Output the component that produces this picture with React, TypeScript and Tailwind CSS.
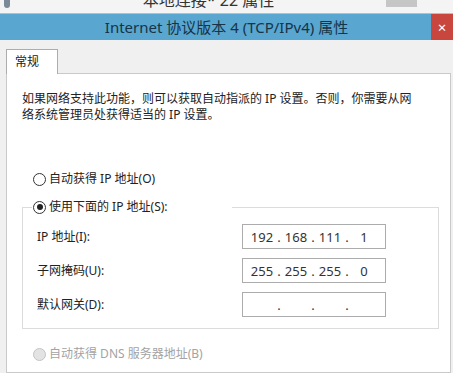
import React from 'react';

const font = 'font-["Noto_Sans","Noto_Sans_CJK_SC",sans-serif]';

function Radio({ checked = false, disabled = false }: { checked?: boolean; disabled?: boolean }) {
  return (
    <span
      className={`flex items-center justify-center w-[13px] h-[13px] rounded-full border shrink-0 ${
        disabled ? 'bg-[#e3e3e3] border-[#c4c4c4]' : 'bg-white border-[#333]'
      }`}
    >
      {checked && <span className="w-[6px] h-[6px] rounded-full bg-[#222]" />}
    </span>
  );
}

function IpBox({ parts }: { parts: string[] }) {
  return (
    <div className="flex items-center w-[144px] h-[25px] border border-[#acacac] bg-white pl-[5px] text-[13px] text-[#333]">
      {parts.map((p, i) => (
        <React.Fragment key={i}>
          {i > 0 && <span className="w-[6px] text-center">.</span>}
          <span className="w-[28px] text-center">{p}</span>
        </React.Fragment>
      ))}
    </div>
  );
}

export default function App() {
  return (
    <div className={`w-[453px] h-[373px] overflow-hidden flex flex-col bg-[#f0f0f0] ${font}`}>
      {/* Ventana de fondo */}
      <div className="relative h-[14px] shrink-0 bg-[#f4f4f4] border-b border-[#bdbdbd] overflow-hidden flex justify-center">
        <span className="w-[6px] h-[8px] ml-[4px] mt-[0px] bg-[#7a8a99] rounded-b-sm absolute left-0 top-0" />
        <span className="-mt-[10px] text-[16px] leading-[20px] text-[#333] pr-[36px]">本地连接* 22 属性</span>
        <span className="absolute left-[386px] top-0 w-[31px] h-[7px] bg-[#c6c6c6]" />
      </div>

      {/* Barra de título */}
      <div className="flex h-[26px] shrink-0 bg-[#59a6d0]">
        <div className="flex-1 flex items-center justify-center pl-[22px] text-[15px] text-[#163447]">
          Internet 协议版本 4 (TCP/IPv4) 属性
        </div>
        <div className="w-[22px] bg-[#c8463d] flex items-center justify-center text-white text-[15px] leading-none">×</div>
      </div>

      {/* Cuerpo */}
      <div className="flex-1 flex flex-col pl-[6px] pr-[2px] pt-[9px]">
        <div className="flex">
          <div className="w-[52px] h-[25px] bg-white border border-b-0 border-[#acacac] pl-[8px] pt-[4px] text-[12px] leading-[16px] text-[#222] relative z-10">
            常规
          </div>
        </div>
        <div className="flex-1 -mt-px bg-white border border-[#c9c9c9] pl-[15px] pr-[11px] pt-[17px] text-[12px] leading-[16px] text-[#222]">
          <p>
            如果网络支持此功能，则可以获取自动指派的 IP 设置。否则，你需要从网
            <br />
            络系统管理员处获得适当的 IP 设置。
          </p>

          <label className="flex items-center gap-[3px] mt-[48px] pl-[11px]">
            <Radio />
            <span>自动获得 IP 地址(O)</span>
          </label>

          <fieldset className="mt-[12px] border border-[#dcdcdc] pb-[11px]">
            <legend className="ml-[9px] w-[200px] pl-[1px] bg-white">
              <span className="flex items-center gap-[3px]">
                <Radio checked />
                <span>使用下面的 IP 地址(S):</span>
              </span>
            </legend>
            <div className="flex flex-col gap-[9px] mt-[9px] pl-[14px]">
              <div className="flex items-center">
                <span className="w-[205px]">IP 地址(I):</span>
                <IpBox parts={['192', '168', '111', '1']} />
              </div>
              <div className="flex items-center">
                <span className="w-[205px]">子网掩码(U):</span>
                <IpBox parts={['255', '255', '255', '0']} />
              </div>
              <div className="flex items-center">
                <span className="w-[205px]">默认网关(D):</span>
                <IpBox parts={['', '', '', '']} />
              </div>
            </div>
          </fieldset>

          <label className="flex items-center gap-[3px] mt-[17px] pl-[11px] text-[#a3a3a3]">
            <Radio disabled />
            <span>自动获得 DNS 服务器地址(B)</span>
          </label>
        </div>
      </div>
    </div>
  );
}
